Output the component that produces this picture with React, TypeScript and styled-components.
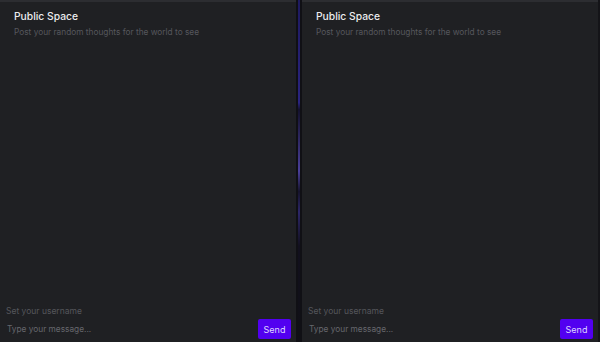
import React from "react";
import styled, { createGlobalStyle } from "styled-components";

const Global = createGlobalStyle`
  html, body { margin: 0; padding: 0; background: #141418; }
  body { font-family: Inter, "Noto Sans", sans-serif; }
  #root { width: 600px; height: 342px; }
`;

const Page = styled.div`
  display: flex;
  width: 600px;
  height: 342px;
  background: #141418;
`;

const Panel = styled.div<{ $width: number }>`
  width: ${(p) => p.$width}px;
  height: 342px;
  box-sizing: border-box;
  border-top: 2px solid #2c2d31;
  background: #1f2023;
  display: flex;
  flex-direction: column;
`;

const Divider = styled.div`
  width: 6px;
  display: flex;
  justify-content: center;
  background: #101015;
`;

const Line = styled.div`
  width: 2px;
  background: linear-gradient(
    to bottom,
    #1e1a60 0%,
    #2a2480 30%,
    #14122e 32%,
    #4a3f9a 50%,
    #16142c 56%,
    #2c2668 62%,
    #12101e 72%,
    #101015 100%
  );
`;

const Header = styled.div`
  padding: 8px 14px 0;
`;

const Title = styled.div`
  color: #ececef;
  font-size: 10.3px;
  font-weight: 500;
  line-height: 12px;
`;

const Subtitle = styled.div`
  color: #56575d;
  font-size: 8.3px;
  line-height: 11px;
  margin-top: 5px;
`;

const Spacer = styled.div`
  flex: 1;
`;

const Footer = styled.div`
  padding: 0 5px 3px 6px;
  display: flex;
  flex-direction: column;
`;

const UserLabel = styled.div`
  color: #55565b;
  font-size: 8.5px;
  line-height: 12px;
`;

const InputRow = styled.div`
  display: flex;
  align-items: center;
  justify-content: space-between;
  margin-top: 2px;
`;

const MessageInput = styled.div`
  color: #66676d;
  font-size: 8.3px;
  padding-left: 1px;
`;

const SendButton = styled.button`
  width: 33px;
  height: 20px;
  border: none;
  border-radius: 2px;
  background: #5200f0;
  color: #ded6ff;
  font-family: Inter, "Noto Sans", sans-serif;
  font-size: 9px;
  padding: 0;
`;

function ChatPanel({ width }: { width: number }) {
  return (
    <Panel $width={width}>
      <Header>
        <Title>Public Space</Title>
        <Subtitle>Post your random thoughts for the world to see</Subtitle>
      </Header>
      <Spacer />
      <Footer>
        <UserLabel>Set your username</UserLabel>
        <InputRow>
          <MessageInput>Type your message...</MessageInput>
          <SendButton>Send</SendButton>
        </InputRow>
      </Footer>
    </Panel>
  );
}

export default function App() {
  return (
    <>
      <Global />
      <Page>
        <ChatPanel width={296} />
        <Divider>
          <Line />
        </Divider>
        <ChatPanel width={296} />
      </Page>
    </>
  );
}
